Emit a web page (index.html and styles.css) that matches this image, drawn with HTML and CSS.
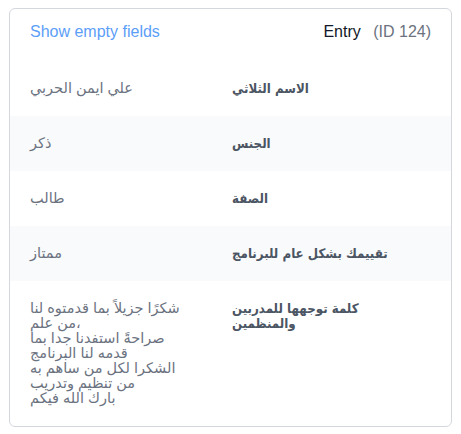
FILE: index.html
```html
<!DOCTYPE html>
<html lang="en">
<head>
<meta charset="utf-8">
<link rel="stylesheet" href="styles.css">
</head>
<body>
<div class="card">
  <div class="header">
    <a class="toggle" href="#">Show empty fields</a>
    <div class="title">Entry <span class="entry-id">(ID 124)</span></div>
  </div>
  <dl class="fields">
    <div class="row">
      <dt class="label">الاسم الثلاثي</dt>
      <dd class="value">علي ايمن الحربي</dd>
    </div>
    <div class="row alt">
      <dt class="label">الجنس</dt>
      <dd class="value">ذكر</dd>
    </div>
    <div class="row">
      <dt class="label">الصفة</dt>
      <dd class="value">طالب</dd>
    </div>
    <div class="row alt">
      <dt class="label">تقييمك بشكل عام للبرنامج</dt>
      <dd class="value">ممتاز</dd>
    </div>
    <div class="row">
      <dt class="label">كلمة توجهها للمدربين والمنظمين</dt>
      <dd class="value"><span class="para">شكرًا جزيلاً بما قدمتوه لنا من علم،</span><span class="para">صراحةً استفدنا جدا بما قدمه لنا البرنامج</span><span class="para">الشكرا لكل من ساهم به من تنظيم وتدريب</span><span class="para">بارك الله فيكم</span></dd>
    </div>
  </dl>
</div>
</body>
</html>
```
FILE: styles.css
```css
html, body {
  margin: 0;
  padding: 0;
  background: #ffffff;
}
body {
  padding: 8px 9px 0 9px;
  font-family: "Liberation Sans", "DejaVu Sans", sans-serif;
}
.card {
  border: 1px solid #d4d7dd;
  border-radius: 6px;
  overflow: hidden;
  background: #fff;
}
.header {
  display: flex;
  justify-content: space-between;
  align-items: center;
  padding: 13px 20px 12px 20px;
  font-size: 16px;
  line-height: 19px;
}
.toggle {
  color: #5c9ef8;
  text-decoration: none;
}
.title {
  color: #111827;
}
.entry-id {
  color: #6b7280;
  margin-left: 8px;
}
.fields {
  margin: 0;
  padding: 8px 0 0 0;
}
.row {
  display: grid;
  grid-template-columns: 160px 1fr;
  column-gap: 42px;
  padding: 20px 20px;
  line-height: 15px;
}
.row.alt {
  background: #f9fafb;
}
.label {
  grid-column: 2;
  grid-row: 1;
  margin: 0;
  max-width: 172px;
  font-family: "DejaVu Sans Condensed", "DejaVu Sans", sans-serif;
  font-size: 13.2px;
  font-weight: bold;
  color: #4b5563;
}
.value {
  grid-column: 1;
  grid-row: 1;
  margin: 0;
  font-size: 14.5px;
  color: #6b7280;
}
.para {
  display: block;
}
```
